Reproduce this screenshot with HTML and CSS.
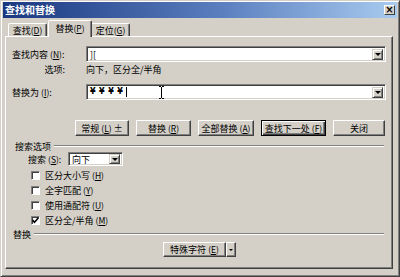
FILE: index.html
```html
<!DOCTYPE html>
<html lang="zh-CN">
<head>
  <meta charset="UTF-8" />
  <title>查找和替换</title>
  <link rel="stylesheet" href="styles.css">
</head>
<body>
  <div class="window">
    <div class="titlebar">
      <span class="title">查找和替换</span>
      <span class="close">×</span>
    </div>

    <div class="tabs">
      <div class="tab">查找 <span class="key">(<u>D</u>)</span></div>
      <div class="tab active">替换 <span class="key">(<u>P</u>)</span></div>
      <div class="tab">定位 <span class="key">(<u>G</u>)</span></div>
    </div>

    <div class="panel">
      <!-- find / replace fields -->
      <div class="field-row">
        <span class="field-label">查找内容 <span class="key">(<u>N</u>)</span>:</span>
        <div class="combo">
          <span class="combo-text">][</span>
          <span class="drop"></span>
        </div>
      </div>
      <div class="options-row">
        <span class="options-label">选项:</span>
        <span>向下，区分全/半角</span>
      </div>
      <div class="field-row replace-row">
        <span class="field-label">替换为 <span class="key">(<u>I</u>)</span>:</span>
        <div class="combo">
          <span class="combo-text yen">¥¥¥¥<span class="caret"></span></span>
          <span class="drop"></span>
          <svg class="ibeam" viewBox="0 0 7 13" width="7" height="13">
            <path d="M1 0.5h2M4 0.5h2M3.5 1v11M1 12.5h2M4 12.5h2" stroke="#000" fill="none" />
          </svg>
        </div>
      </div>

      <!-- buttons -->
      <div class="button-row">
        <button class="btn w-general">常规 <span class="key">(<u>L</u>)</span> ±</button>
        <button class="btn w-replace">替换 <span class="key">(<u>R</u>)</span></button>
        <button class="btn w-all">全部替换 <span class="key">(<u>A</u>)</span></button>
        <button class="btn w-next default">查找下一处 <span class="key">(<u>F</u>)</span></button>
        <button class="btn w-close">关闭</button>
      </div>

      <!-- search options -->
      <div class="group-head first">
        <span>搜索选项</span>
        <span class="etch"></span>
      </div>
      <div class="search-row">
        <span class="search-label">搜索 <span class="key">(<u>S</u>)</span>:</span>
        <div class="combo select">
          <span class="combo-text">向下</span>
          <span class="drop"></span>
        </div>
      </div>
      <div class="check-row"><span class="box"></span>区分大小写 <span class="key">(<u>H</u>)</span></div>
      <div class="check-row"><span class="box"></span>全字匹配 <span class="key">(<u>Y</u>)</span></div>
      <div class="check-row"><span class="box"></span>使用通配符 <span class="key">(<u>U</u>)</span></div>
      <div class="check-row">
        <span class="box">
          <svg viewBox="0 0 7 7" width="7" height="7"><path d="M0.5 3l2 2.2 4-4.5" stroke="#000" stroke-width="1.6" fill="none" /></svg>
        </span>区分全/半角 <span class="key">(<u>M</u>)</span>
      </div>

      <!-- replace -->
      <div class="group-head">
        <span>替换</span>
        <span class="etch"></span>
      </div>
      <div class="special-row">
        <div class="split">
          <span class="split-main">特殊字符 <span class="key">(<u>E</u>)</span></span>
          <span class="split-drop"></span>
        </div>
      </div>
    </div>
  </div>
</body>
</html>
```

FILE: styles.css
```css
body {
  margin: 0;
  background: #d4d0c8;
  color: #000;
  font-family: "Noto Sans CJK SC", "Liberation Sans", sans-serif;
  font-size: 9px;
  line-height: 1;
}

.window {
  width: 400px;
  height: 277px;
  box-sizing: border-box;
  border: 1px solid;
  border-color: #d4d0c8 #404040 #404040 #d4d0c8;
  box-shadow: inset 1px 1px #fff, inset -1px -1px #808080;
  padding: 1px 2px 2px 2px;
}

.titlebar {
  height: 16px;
  display: flex;
  align-items: center;
  justify-content: space-between;
  padding: 0 2px 0 2px;
  background: linear-gradient(to right, #1a3880, #5a7ebe 55%, #a8cbf0);
}

.title {
  color: #fff;
  font-weight: bold;
  font-size: 10px;
}

.close {
  width: 11px;
  height: 10px;
  box-sizing: border-box;
  background: #d4d0c8;
  border: 1px solid;
  border-color: #fff #404040 #404040 #fff;
  font-family: "DejaVu Sans", sans-serif;
  font-weight: bold;
  font-size: 10px;
  display: flex;
  align-items: center;
  justify-content: center;
}

.key {
  font-size: 8.5px;
}

/* tabs */
.tabs {
  display: flex;
  align-items: flex-end;
  height: 16px;
  margin-top: 2px;
  padding-left: 5px;
}

.tab {
  height: 13px;
  box-sizing: border-box;
  width: 39px;
  display: flex;
  align-items: center;
  justify-content: center;
  border: 1px solid;
  border-bottom: none;
  border-color: #fff #404040 transparent #fff;
  border-radius: 2px 2px 0 0;
  box-shadow: inset -1px 0 #808080;
}

.tab.active {
  position: relative;
  z-index: 1;
  width: 44px;
  height: 17px;
  margin: 0 -2px -1px -1px;
  background: #d4d0c8;
  padding-bottom: 2px;
}

.tab + .tab {
  margin-left: 1px;
}

/* main panel */
.panel {
  width: 388px;
  height: 233px;
  box-sizing: border-box;
  margin-left: 2px;
  border: 1px solid;
  border-color: #fff #404040 #404040 #fff;
  box-shadow: inset -1px -1px #808080;
  padding: 9px 6px 0 6px;
}

.field-row {
  display: flex;
  align-items: center;
  height: 16px;
}

.replace-row {
  margin-top: 8px;
}

.field-label {
  width: 74px;
  flex: none;
}

.combo {
  position: relative;
  flex: 1;
  height: 16px;
  box-sizing: border-box;
  display: flex;
  align-items: center;
  background: #fff;
  border: 1px solid;
  border-color: #808080 #fff #fff #808080;
  box-shadow: inset 1px 1px #404040, inset -1px -1px #d4d0c8;
  padding: 0 2px 0 3px;
}

.combo-text {
  flex: 1;
  display: flex;
  align-items: center;
}

.yen {
  font-family: "DejaVu Sans", sans-serif;
  font-weight: bold;
  font-size: 8px;
  letter-spacing: 3.5px;
}

.caret {
  display: inline-block;
  width: 1px;
  height: 10px;
  background: #000;
}

.ibeam {
  position: absolute;
  left: 71px;
  top: 1px;
}

.drop {
  width: 11px;
  height: 11px;
  box-sizing: border-box;
  background: #d4d0c8;
  border: 1px solid;
  border-color: #d4d0c8 #404040 #404040 #d4d0c8;
  box-shadow: inset 1px 1px #fff, inset -1px -1px #808080;
  display: flex;
  align-items: center;
  justify-content: center;
}

.drop::after {
  content: "";
  border-left: 3px solid transparent;
  border-right: 3px solid transparent;
  border-top: 3px solid #000;
  margin-top: 1px;
}

.options-row {
  display: flex;
  align-items: center;
  height: 14px;
}

.options-label {
  width: 53px;
  padding-right: 21px;
  text-align: right;
}

/* buttons */
.button-row {
  display: flex;
  gap: 7px;
  margin-top: 20px;
  padding-left: 63px;
}

.btn {
  height: 16px;
  box-sizing: border-box;
  padding: 0;
  font-family: inherit;
  font-size: 9px;
  color: #000;
  background: #d4d0c8;
  border: 1px solid;
  border-color: #fff #404040 #404040 #fff;
  box-shadow: inset -1px -1px #808080;
  display: flex;
  align-items: center;
  justify-content: center;
  gap: 2px;
}

.btn.default {
  border-color: #000;
  box-shadow: inset 1px 1px #fff, inset -1px -1px #404040, inset -2px -2px #808080;
}

.w-general { width: 54px; }
.w-replace { width: 55px; }
.w-all { width: 56px; }
.w-next { width: 65px; }
.w-close { width: 52px; }

/* groups */
.group-head {
  display: flex;
  align-items: center;
  height: 10px;
  margin-top: 1px;
  padding-left: 1px;
  margin-right: 2px;
}

.group-head.first {
  margin-top: 5px;
  padding-left: 3px;
}

.etch {
  flex: 1;
  margin-left: 3px;
  border-top: 1px solid #808080;
  border-bottom: 1px solid #fff;
}

.search-row {
  display: flex;
  align-items: center;
  height: 14px;
  margin-top: 1px;
  padding-left: 16px;
}

.search-label {
  width: 40px;
}

.combo.select {
  flex: none;
  width: 55px;
  height: 14px;
}

.combo.select .drop {
  height: 10px;
}

.check-row {
  display: flex;
  align-items: center;
  height: 15px;
  padding-left: 19px;
  gap: 2px;
}

.search-row + .check-row {
  margin-top: 2px;
}

.box {
  width: 9px;
  height: 9px;
  box-sizing: border-box;
  margin-right: 3px;
  background: #fff;
  border: 1px solid;
  border-color: #808080 #fff #fff #808080;
  box-shadow: inset 1px 1px #404040;
  display: flex;
  align-items: center;
  justify-content: center;
}

.special-row {
  display: flex;
  margin-top: 3px;
  padding-left: 151px;
}

.split {
  display: flex;
  height: 15px;
}

.split-main,
.split-drop {
  box-sizing: border-box;
  background: #d4d0c8;
  border: 1px solid;
  border-color: #fff #404040 #404040 #fff;
  box-shadow: inset -1px -1px #808080;
  display: flex;
  align-items: center;
  justify-content: center;
}

.split-main {
  width: 63px;
  gap: 2px;
}

.split-drop {
  width: 10px;
}

.split-drop::after {
  content: "";
  border-left: 2px solid transparent;
  border-right: 2px solid transparent;
  border-top: 2px solid #000;
}
```
